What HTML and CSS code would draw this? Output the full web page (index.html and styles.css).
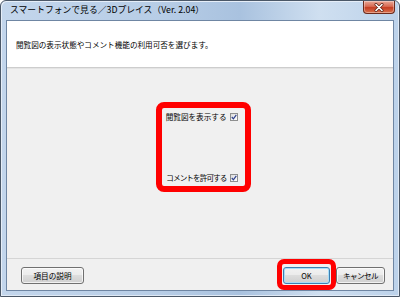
FILE: index.html
```
<!DOCTYPE html>
<html lang="ja">
<head>
    <meta charset="UTF-8">
    <title>スマートフォンで見る／3Dプレイス</title>
    <link rel="stylesheet" href="styles.css">
</head>
<body>
    <div class="window">
        <div class="titlebar">
            <span class="title">スマートフォンで見る／3Dプレイス（Ver. 2.04）</span>
            <span class="close">
                <svg width="10" height="9" viewBox="0 0 10 9">
                    <path d="M2 1.5 L8 7.5 M8 1.5 L2 7.5" stroke="#5a2418" stroke-width="3" stroke-linecap="round"/>
                    <path d="M2 1.5 L8 7.5 M8 1.5 L2 7.5" stroke="#fff" stroke-width="1.6" stroke-linecap="round"/>
                </svg>
            </span>
        </div>
        <div class="client">
            <div class="header">閲覧図の表示状態やコメント機能の利用可否を選びます。</div>
            <div class="main">
                <div class="options">
                    <label class="option">閲覧図を表示する<span class="check"><svg width="6" height="6" viewBox="0 0 6 6"><path d="M0.8 3 L2.4 4.8 L5.3 0.8" fill="none" stroke="#2c3f8c" stroke-width="1.2"/></svg></span></label>
                    <label class="option"><span class="narrow">コメントを許可する</span><span class="check"><svg width="6" height="6" viewBox="0 0 6 6"><path d="M0.8 3 L2.4 4.8 L5.3 0.8" fill="none" stroke="#2c3f8c" stroke-width="1.2"/></svg></span></label>
                </div>
            </div>
            <div class="footer">
                <button class="btn btn-help">項目の説明</button>
                <span class="spacer"></span>
                <button class="btn btn-ok marked">OK</button>
                <button class="btn btn-cancel">キャンセル</button>
            </div>
        </div>
    </div>
</body>
</html>
```

FILE: styles.css
```
body {
    margin: 0;
    width: 400px;
    height: 297px;
    overflow: hidden;
    font-family: "Noto Sans CJK JP", "Noto Sans", sans-serif;
    background: #fff;
}
.window {
    box-sizing: border-box;
    width: 400px;
    height: 297px;
    display: flex;
    flex-direction: column;
    padding: 0 5px 5px 5px;
    border: 1px solid #4b5868;
    border-radius: 6px 6px 0 0;
    background: linear-gradient(90deg, #c3d6ec 0%, #b7cde6 40%, #a9c2df 60%, #cfdff0 80%, #bcd2ea 100%);
    box-shadow: inset 1px 1px 0 #e6eef8, inset -1px -1px 0 #dfe9f5;
}
.titlebar {
    height: 19px;
    display: flex;
    align-items: flex-start;
}
.title {
    font-size: 8.8px;
    line-height: 10px;
    padding: 4px 0 0 4px;
    color: #000;
    white-space: nowrap;
}
.close {
    margin-left: auto;
    margin-right: -1px;
    width: 30px;
    height: 12px;
    display: flex;
    align-items: center;
    justify-content: center;
    border: 1px solid #6b2a1c;
    border-top: none;
    border-radius: 0 0 4px 4px;
    background: linear-gradient(#e9a897 0%, #d86a52 45%, #c53d22 55%, #d9734f 100%);
    box-shadow: inset 0 0 0 1px rgba(255,255,255,0.35);
}
.client {
    flex: 1;
    display: flex;
    flex-direction: column;
    border: 1px solid #6f86a3;
    background: #f0f0f0;
    font-size: 7.6px;
    color: #000;
}
.header {
    height: 45px;
    display: flex;
    align-items: center;
    padding: 1px 0 0 9px;
    background: #fff;
    border-bottom: 1px solid #cdcdcd;
    box-shadow: 0 1px 0 #e4e4e4;
}
.main {
    flex: 1;
    display: flex;
    justify-content: center;
    align-items: flex-start;
    padding-left: 6px;
}
.options {
    box-sizing: border-box;
    width: 95px;
    height: 90px;
    margin-top: 34px;
    padding: 4px 7px 3px 0;
    border: 6px solid #f00;
    border-radius: 8px;
    display: flex;
    flex-direction: column;
    justify-content: space-between;
    align-items: flex-end;
}
.option {
    display: flex;
    align-items: center;
    line-height: 10px;
    white-space: nowrap;
}
.narrow {
    letter-spacing: -0.9px;
}
.check {
    box-sizing: border-box;
    width: 8px;
    height: 8px;
    margin-left: 3px;
    display: flex;
    align-items: center;
    justify-content: center;
    border: 1px solid #8e8f8f;
    background: linear-gradient(135deg, #dcdcdc, #ffffff);
}
.footer {
    height: 32px;
    display: flex;
    align-items: flex-start;
    padding: 8px 8px 0 14px;
    gap: 6px;
    box-sizing: border-box;
    border-top: 1px solid #d5d5d5;
}
.spacer {
    flex: 1;
}
.btn {
    box-sizing: border-box;
    height: 17px;
    padding: 0;
    font-family: inherit;
    font-size: 7.6px;
    color: #000;
    border: 1px solid #707070;
    border-radius: 3px;
    background: linear-gradient(#f2f2f2 0%, #ebebeb 50%, #dddddd 50%, #cfcfcf 100%);
    box-shadow: inset 0 0 0 1px rgba(255,255,255,0.7);
}
.btn-help {
    width: 63px;
}
.btn-ok {
    width: 47px;
    border-color: #3c7fb1;
    box-shadow: inset 0 0 0 1px #a7dcf7;
}
.btn-cancel {
    width: 49px;
    letter-spacing: -0.6px;
}
.marked {
    position: relative;
}
.marked::after {
    content: "";
    position: absolute;
    top: -9px;
    bottom: -7px;
    left: -7px;
    right: -7px;
    border: 5px solid #f00;
    border-radius: 7px;
}
```
